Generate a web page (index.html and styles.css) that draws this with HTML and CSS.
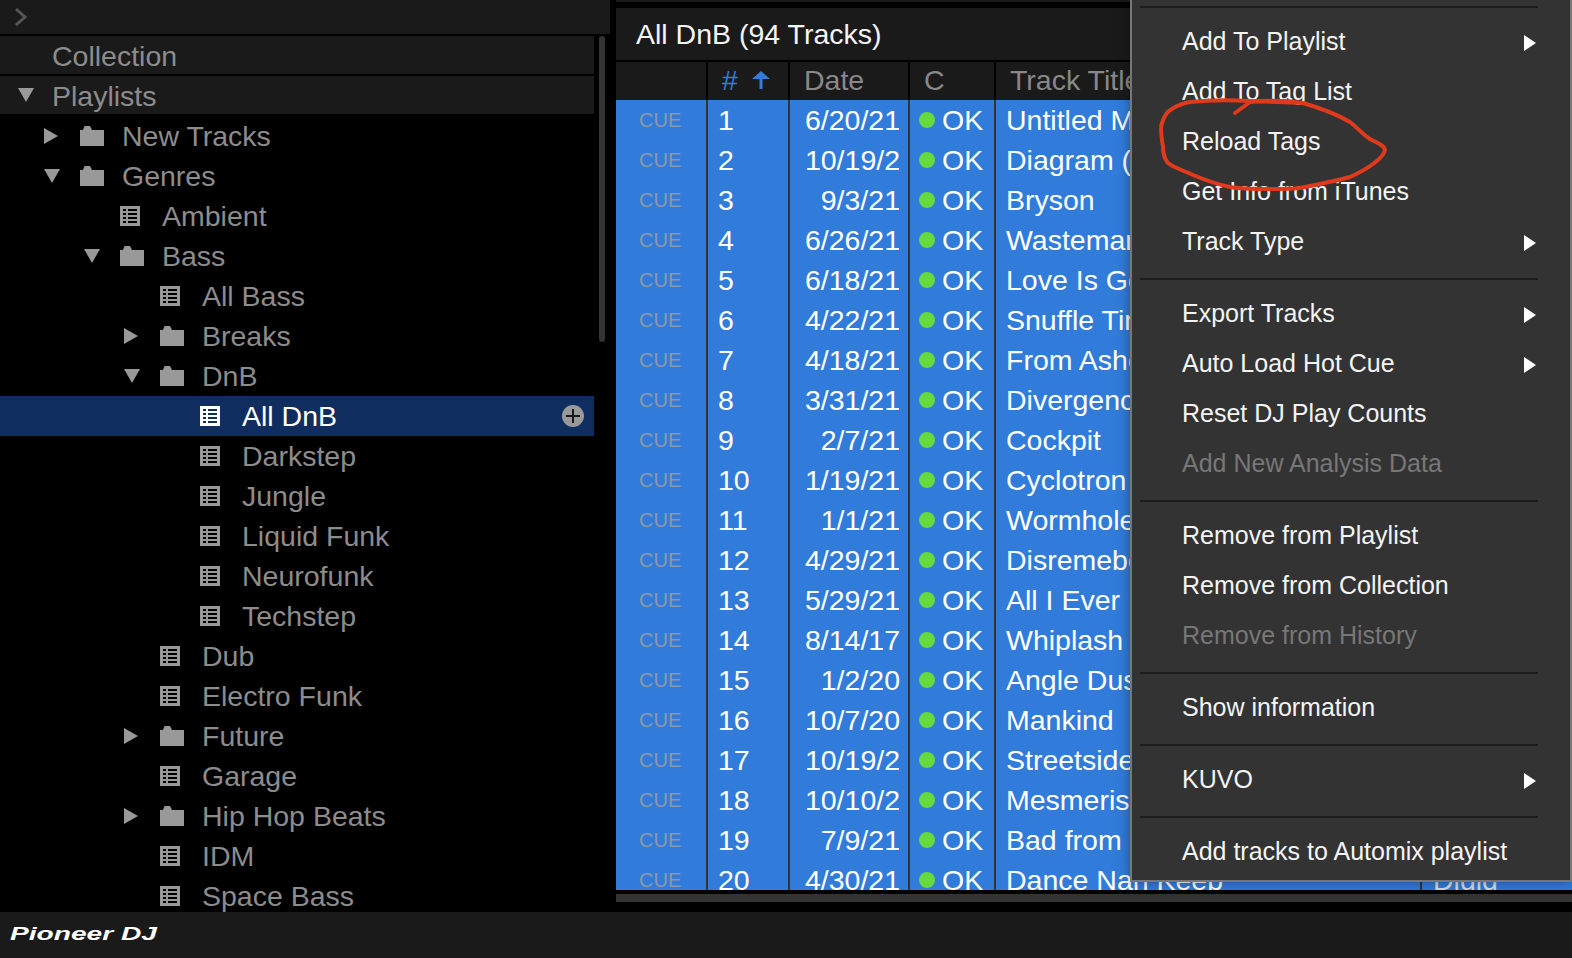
FILE: index.html
```html
<!DOCTYPE html>
<html lang="en">
<head>
  <meta charset="UTF-8" />
  <title>rekordbox</title>
  <link rel="stylesheet" href="styles.css">
</head>
<body>

<svg class="sprite" width="0" height="0">
  <symbol id="folder" viewBox="0 0 24 20">
    <path d="M0 4H3L4.5 0H10L12 4H24V20H0Z" />
  </symbol>
  <symbol id="list" viewBox="0 0 20 20">
    <path fill-rule="evenodd" d="M0 0H20V20H0Z M3 3H6V5H3Z M8 3H17V5H8Z M3 7H6V9H3Z M8 7H17V9H8Z M3 11H6V13H3Z M8 11H17V13H8Z M3 15H6V17H3Z M8 15H17V17H8Z" />
  </symbol>
</svg>

<div class="app">
  <div class="sidebar">
    <div class="topbar">
      <svg class="chevron" width="14" height="20" viewBox="0 0 14 20"><polyline points="2,2 11,10 2,18" /></svg>
    </div>
    <div class="tree-wrap">
      <div class="tree">
        <div class="tree-head"><span class="arrow-slot"></span><span class="label">Collection</span></div>
        <div class="tree-head"><span class="arrow-slot"><i class="tri-down"></i></span><span class="label">Playlists</span></div>

        <div class="node lvl1"><span class="arrow-slot"><i class="tri-right"></i></span><span class="icon-slot"><svg class="ic-folder"><use href="#folder" /></svg></span><span class="label">New Tracks</span></div>
        <div class="node lvl1"><span class="arrow-slot"><i class="tri-down"></i></span><span class="icon-slot"><svg class="ic-folder"><use href="#folder" /></svg></span><span class="label">Genres</span></div>
        <div class="node lvl2"><span class="arrow-slot"></span><span class="icon-slot"><svg class="ic-list"><use href="#list" /></svg></span><span class="label">Ambient</span></div>
        <div class="node lvl2"><span class="arrow-slot"><i class="tri-down"></i></span><span class="icon-slot"><svg class="ic-folder"><use href="#folder" /></svg></span><span class="label">Bass</span></div>
        <div class="node lvl3"><span class="arrow-slot"></span><span class="icon-slot"><svg class="ic-list"><use href="#list" /></svg></span><span class="label">All Bass</span></div>
        <div class="node lvl3"><span class="arrow-slot"><i class="tri-right"></i></span><span class="icon-slot"><svg class="ic-folder"><use href="#folder" /></svg></span><span class="label">Breaks</span></div>
        <div class="node lvl3"><span class="arrow-slot"><i class="tri-down"></i></span><span class="icon-slot"><svg class="ic-folder"><use href="#folder" /></svg></span><span class="label">DnB</span></div>
        <div class="node lvl4 selected"><span class="arrow-slot"></span><span class="icon-slot"><svg class="ic-list"><use href="#list" /></svg></span><span class="label">All DnB</span>
          <svg class="add-btn" width="22" height="22" viewBox="0 0 22 22"><circle cx="11" cy="11" r="11" /><path d="M11 4V18M4 11H18" /></svg>
        </div>
        <div class="node lvl4"><span class="arrow-slot"></span><span class="icon-slot"><svg class="ic-list"><use href="#list" /></svg></span><span class="label">Darkstep</span></div>
        <div class="node lvl4"><span class="arrow-slot"></span><span class="icon-slot"><svg class="ic-list"><use href="#list" /></svg></span><span class="label">Jungle</span></div>
        <div class="node lvl4"><span class="arrow-slot"></span><span class="icon-slot"><svg class="ic-list"><use href="#list" /></svg></span><span class="label">Liquid Funk</span></div>
        <div class="node lvl4"><span class="arrow-slot"></span><span class="icon-slot"><svg class="ic-list"><use href="#list" /></svg></span><span class="label">Neurofunk</span></div>
        <div class="node lvl4"><span class="arrow-slot"></span><span class="icon-slot"><svg class="ic-list"><use href="#list" /></svg></span><span class="label">Techstep</span></div>
        <div class="node lvl3"><span class="arrow-slot"></span><span class="icon-slot"><svg class="ic-list"><use href="#list" /></svg></span><span class="label">Dub</span></div>
        <div class="node lvl3"><span class="arrow-slot"></span><span class="icon-slot"><svg class="ic-list"><use href="#list" /></svg></span><span class="label">Electro Funk</span></div>
        <div class="node lvl3"><span class="arrow-slot"><i class="tri-right"></i></span><span class="icon-slot"><svg class="ic-folder"><use href="#folder" /></svg></span><span class="label">Future</span></div>
        <div class="node lvl3"><span class="arrow-slot"></span><span class="icon-slot"><svg class="ic-list"><use href="#list" /></svg></span><span class="label">Garage</span></div>
        <div class="node lvl3"><span class="arrow-slot"><i class="tri-right"></i></span><span class="icon-slot"><svg class="ic-folder"><use href="#folder" /></svg></span><span class="label">Hip Hop Beats</span></div>
        <div class="node lvl3"><span class="arrow-slot"></span><span class="icon-slot"><svg class="ic-list"><use href="#list" /></svg></span><span class="label">IDM</span></div>
        <div class="node lvl3"><span class="arrow-slot"></span><span class="icon-slot"><svg class="ic-list"><use href="#list" /></svg></span><span class="label">Space Bass</span></div>
      </div>
      <div class="tree-thumb"></div>
    </div>
  </div>

  <div class="main">
    <div class="strip"></div>
    <div class="title">All DnB (94 Tracks)</div>
    <div class="row head">
      <div class="cell"></div>
      <div class="cell h-num">#
        <svg class="sort-arrow" width="18" height="18" viewBox="0 0 18 18"><path d="M9 0L18 8H10.5V18H7.5V8H0Z" /></svg>
      </div>
      <div class="cell h-date">Date</div>
      <div class="cell h-c">C</div>
      <div class="cell h-title">Track Title</div>
      <div class="cell"></div>
    </div>
    <div class="rows">
      <div class="row"><div class="cell cue">CUE</div><div class="cell num">1</div><div class="cell date">6/20/21</div><div class="cell check"><i class="dot"></i>OK</div><div class="cell name">Untitled Mix</div><div class="cell extra"></div></div>
      <div class="row"><div class="cell cue">CUE</div><div class="cell num">2</div><div class="cell date long">10/19/2</div><div class="cell check"><i class="dot"></i>OK</div><div class="cell name">Diagram (Original Mix)</div><div class="cell extra"></div></div>
      <div class="row"><div class="cell cue">CUE</div><div class="cell num">3</div><div class="cell date">9/3/21</div><div class="cell check"><i class="dot"></i>OK</div><div class="cell name">Bryson</div><div class="cell extra"></div></div>
      <div class="row"><div class="cell cue">CUE</div><div class="cell num">4</div><div class="cell date">6/26/21</div><div class="cell check"><i class="dot"></i>OK</div><div class="cell name">Wasteman</div><div class="cell extra"></div></div>
      <div class="row"><div class="cell cue">CUE</div><div class="cell num">5</div><div class="cell date">6/18/21</div><div class="cell check"><i class="dot"></i>OK</div><div class="cell name">Love Is Gone</div><div class="cell extra"></div></div>
      <div class="row"><div class="cell cue">CUE</div><div class="cell num">6</div><div class="cell date">4/22/21</div><div class="cell check"><i class="dot"></i>OK</div><div class="cell name">Snuffle Time</div><div class="cell extra"></div></div>
      <div class="row"><div class="cell cue">CUE</div><div class="cell num">7</div><div class="cell date">4/18/21</div><div class="cell check"><i class="dot"></i>OK</div><div class="cell name">From Ashes</div><div class="cell extra"></div></div>
      <div class="row"><div class="cell cue">CUE</div><div class="cell num">8</div><div class="cell date">3/31/21</div><div class="cell check"><i class="dot"></i>OK</div><div class="cell name">Divergence</div><div class="cell extra"></div></div>
      <div class="row"><div class="cell cue">CUE</div><div class="cell num">9</div><div class="cell date">2/7/21</div><div class="cell check"><i class="dot"></i>OK</div><div class="cell name">Cockpit</div><div class="cell extra"></div></div>
      <div class="row"><div class="cell cue">CUE</div><div class="cell num">10</div><div class="cell date">1/19/21</div><div class="cell check"><i class="dot"></i>OK</div><div class="cell name">Cyclotron</div><div class="cell extra"></div></div>
      <div class="row"><div class="cell cue">CUE</div><div class="cell num">11</div><div class="cell date">1/1/21</div><div class="cell check"><i class="dot"></i>OK</div><div class="cell name">Wormhole</div><div class="cell extra"></div></div>
      <div class="row"><div class="cell cue">CUE</div><div class="cell num">12</div><div class="cell date">4/29/21</div><div class="cell check"><i class="dot"></i>OK</div><div class="cell name">Disremebered</div><div class="cell extra"></div></div>
      <div class="row"><div class="cell cue">CUE</div><div class="cell num">13</div><div class="cell date">5/29/21</div><div class="cell check"><i class="dot"></i>OK</div><div class="cell name">All I Ever</div><div class="cell extra"></div></div>
      <div class="row"><div class="cell cue">CUE</div><div class="cell num">14</div><div class="cell date">8/14/17</div><div class="cell check"><i class="dot"></i>OK</div><div class="cell name">Whiplash</div><div class="cell extra"></div></div>
      <div class="row"><div class="cell cue">CUE</div><div class="cell num">15</div><div class="cell date">1/2/20</div><div class="cell check"><i class="dot"></i>OK</div><div class="cell name">Angle Dust</div><div class="cell extra"></div></div>
      <div class="row"><div class="cell cue">CUE</div><div class="cell num">16</div><div class="cell date">10/7/20</div><div class="cell check"><i class="dot"></i>OK</div><div class="cell name">Mankind</div><div class="cell extra"></div></div>
      <div class="row"><div class="cell cue">CUE</div><div class="cell num">17</div><div class="cell date long">10/19/2</div><div class="cell check"><i class="dot"></i>OK</div><div class="cell name">Streetside</div><div class="cell extra"></div></div>
      <div class="row"><div class="cell cue">CUE</div><div class="cell num">18</div><div class="cell date long">10/10/2</div><div class="cell check"><i class="dot"></i>OK</div><div class="cell name">Mesmerise</div><div class="cell extra"></div></div>
      <div class="row"><div class="cell cue">CUE</div><div class="cell num">19</div><div class="cell date">7/9/21</div><div class="cell check"><i class="dot"></i>OK</div><div class="cell name">Bad from</div><div class="cell extra"></div></div>
      <div class="row"><div class="cell cue">CUE</div><div class="cell num">20</div><div class="cell date">4/30/21</div><div class="cell check"><i class="dot"></i>OK</div><div class="cell name">Dance Nan Keeb</div><div class="cell extra">Digid</div></div>
    </div>
    <div class="hscroll"></div>
  </div>
</div>

<div class="footer">
  <svg class="logo" width="150" height="24" viewBox="0 0 150 24"><text x="0" y="17" textLength="147" lengthAdjust="spacingAndGlyphs">Pioneer DJ</text></svg>
</div>

<div class="menu">
  <div class="sep"></div>
  <div class="item">Add To Playlist<i class="sub"></i></div>
  <div class="item">Add To Tag List</div>
  <div class="item">Reload Tags</div>
  <div class="item">Get Info from iTunes</div>
  <div class="item">Track Type<i class="sub"></i></div>
  <div class="sep"></div>
  <div class="item">Export Tracks<i class="sub"></i></div>
  <div class="item">Auto Load Hot Cue<i class="sub"></i></div>
  <div class="item">Reset DJ Play Counts</div>
  <div class="item disabled">Add New Analysis Data</div>
  <div class="sep"></div>
  <div class="item">Remove from Playlist</div>
  <div class="item">Remove from Collection</div>
  <div class="item disabled">Remove from History</div>
  <div class="sep"></div>
  <div class="item">Show information</div>
  <div class="sep"></div>
  <div class="item">KUVO<i class="sub"></i></div>
  <div class="sep"></div>
  <div class="item">Add tracks to Automix playlist</div>
</div>

<!-- hand drawn circle on top of the screenshot -->
<svg class="scribble" width="1572" height="958" viewBox="0 0 1572 958">
  <path d="M1235 113 L1250 102 C1270 100 1290 101 1303 103 C1320 108 1338 115 1350 122 C1358 128 1362 134 1370 139 C1378 143 1385 146 1385 150 C1384 157 1370 168 1350 177 C1335 181 1315 185 1300 188 C1290 189 1280 189 1270 189 C1255 189 1242 189 1230 187 C1215 184 1205 180 1193 175 C1185 171 1174 168 1168 163 C1164 158 1163 150 1163 147 C1161 135 1160 127 1162 123 C1164 116 1168 111 1172 109 C1178 105 1184 103 1190 102 C1210 100 1230 100 1250 101 L1303 103" />
</svg>

</body>
</html>
```

FILE: styles.css
```css
html, body {
  margin: 0;
  height: 100%;
  overflow: hidden;
}

body {
  position: relative;
  width: 1572px;
  height: 958px;
  background-color: #000;
  color: #8c8c8c;
  font-family: "Liberation Sans", Arial, sans-serif;
  font-size: 28.5px;
}

.sprite {
  position: absolute;
}

.app {
  display: flex;
  height: 912px;
}

/* left side */
.sidebar {
  width: 610px;
  flex: none;
  display: flex;
  flex-direction: column;
}

.topbar {
  height: 34px;
  flex: none;
  margin-bottom: 2px;
  background-color: #1a1a1a;
  display: flex;
  align-items: center;
  padding-left: 14px;
}

.chevron polyline {
  fill: none;
  stroke: #555;
  stroke-width: 3;
}

.tree-wrap {
  flex: 1;
  display: flex;
  min-height: 0;
  overflow: hidden;
}

.tree {
  width: 594px;
  flex: none;
}

.tree-thumb {
  width: 6px;
  height: 306px;
  margin-left: 5px;
  border-radius: 3px;
  background-color: #333;
}

.tree-head {
  height: 38px;
  margin-bottom: 2px;
  padding-left: 16px;
  background-color: #1a1a1a;
  display: flex;
  align-items: center;
}

.tree-head .arrow-slot {
  width: 36px;
  padding-left: 2px;
  box-sizing: border-box;
}

.tree-head .label {
  padding-top: 3px;
}

.node {
  height: 40px;
  display: flex;
  align-items: center;
}

.lvl1 { padding-left: 44px; }
.lvl2 { padding-left: 84px; }
.lvl3 { padding-left: 124px; }
.lvl4 { padding-left: 164px; }

.arrow-slot {
  width: 36px;
  flex: none;
  display: flex;
  align-items: center;
}

.icon-slot {
  width: 42px;
  flex: none;
  display: flex;
  align-items: center;
}

.tri-right {
  width: 0;
  height: 0;
  border-left: 14px solid #999;
  border-top: 8px solid transparent;
  border-bottom: 8px solid transparent;
}

.tri-down {
  width: 0;
  height: 0;
  border-top: 14px solid #999;
  border-left: 8px solid transparent;
  border-right: 8px solid transparent;
}

.ic-folder {
  width: 24px;
  height: 20px;
  fill: #999;
}

.ic-list {
  width: 20px;
  height: 20px;
  fill: #999;
}

.selected {
  background-color: #0f2d5f;
  color: #fff;
}

.selected .ic-list {
  fill: #fff;
}

.add-btn {
  margin-left: auto;
  margin-right: 10px;
}

.add-btn circle {
  fill: #999;
}

.add-btn path {
  fill: none;
  stroke: #1a1a1a;
  stroke-width: 2;
}

/* track list */
.main {
  flex: 1;
  margin-left: 6px;
  min-width: 0;
  display: flex;
  flex-direction: column;
}

.strip {
  height: 2px;
  margin-bottom: 6px;
  background-color: #1a1a1a;
  flex: none;
}

.title {
  height: 52px;
  flex: none;
  margin-bottom: 2px;
  padding-left: 20px;
  background-color: #1a1a1a;
  color: #f4f4f4;
  display: flex;
  align-items: center;
}

.row {
  display: grid;
  grid-template-columns: 92px 82px 120px 86px 426px 1fr;
  height: 40px;
  background-color: #317cda;
  color: #fff;
}

.cell {
  box-sizing: border-box;
  border-right: 2px solid #333;
  display: flex;
  align-items: center;
  white-space: nowrap;
  overflow: hidden;
}

.cell:last-child {
  border-right: none;
}

.row.head {
  height: 38px;
  flex: none;
  background-color: #1a1a1a;
  color: #888;
}

.head .cell {
  border-right-color: #000;
  padding-bottom: 2px;
}

.h-num {
  color: #317cda;
  padding-left: 14px;
}

.sort-arrow {
  margin-left: 14px;
  fill: #317cda;
}

.h-date { padding-left: 14px; }
.h-c { padding-left: 14px; }
.h-title { padding-left: 14px; }

.rows {
  height: 790px;
  flex: none;
  overflow: hidden;
}

.cue {
  padding-left: 23px;
  font-size: 20px;
  color: #8f98a6;
}

.num { padding-left: 10px; }

.date {
  justify-content: flex-end;
  padding-right: 8px;
}

.date.long { padding-right: 8px; }

.check { padding-left: 9px; }

.dot {
  width: 16px;
  height: 16px;
  margin-right: 7px;
  border-radius: 50%;
  background-color: #66d93f;
}

.name { padding-left: 10px; }

.extra {
  padding-left: 11px;
  color: #d8dde4;
}

.hscroll {
  height: 8px;
  margin-top: 4px;
  background-color: #333;
  flex: none;
}

.footer {
  height: 46px;
  background-color: #1a1a1a;
  display: flex;
  align-items: center;
  padding-left: 10px;
}

.logo text {
  font-size: 18px;
  font-weight: bold;
  font-style: italic;
  fill: #fff;
}

/* context menu */
.menu {
  position: absolute;
  top: -6px;
  right: 0;
  width: 442px;
  height: 888px;
  box-sizing: border-box;
  padding-bottom: 3px;
  border: 2px solid #777;
  background-color: #333;
  color: #f4f4f4;
  font-size: 25px;
  box-shadow: 0 0 12px rgba(0, 0, 0, 0.4);
}

.sep {
  height: 2px;
  margin: 10px 32px 10px 8px;
  background-color: #1c1c1c;
}

.item {
  box-sizing: border-box;
  height: 50px;
  padding: 0 34px 3px 50px;
  display: flex;
  align-items: center;
  justify-content: space-between;
}

.item.disabled {
  color: #777;
}

.sub {
  width: 0;
  height: 0;
  margin-top: 3px;
  border-left: 12px solid #fff;
  border-top: 8px solid transparent;
  border-bottom: 8px solid transparent;
}

.scribble {
  position: absolute;
  top: 0;
  left: 0;
  pointer-events: none;
}

.scribble path {
  fill: none;
  stroke: #e0391c;
  stroke-width: 4;
  stroke-linecap: round;
  stroke-linejoin: round;
}
```
